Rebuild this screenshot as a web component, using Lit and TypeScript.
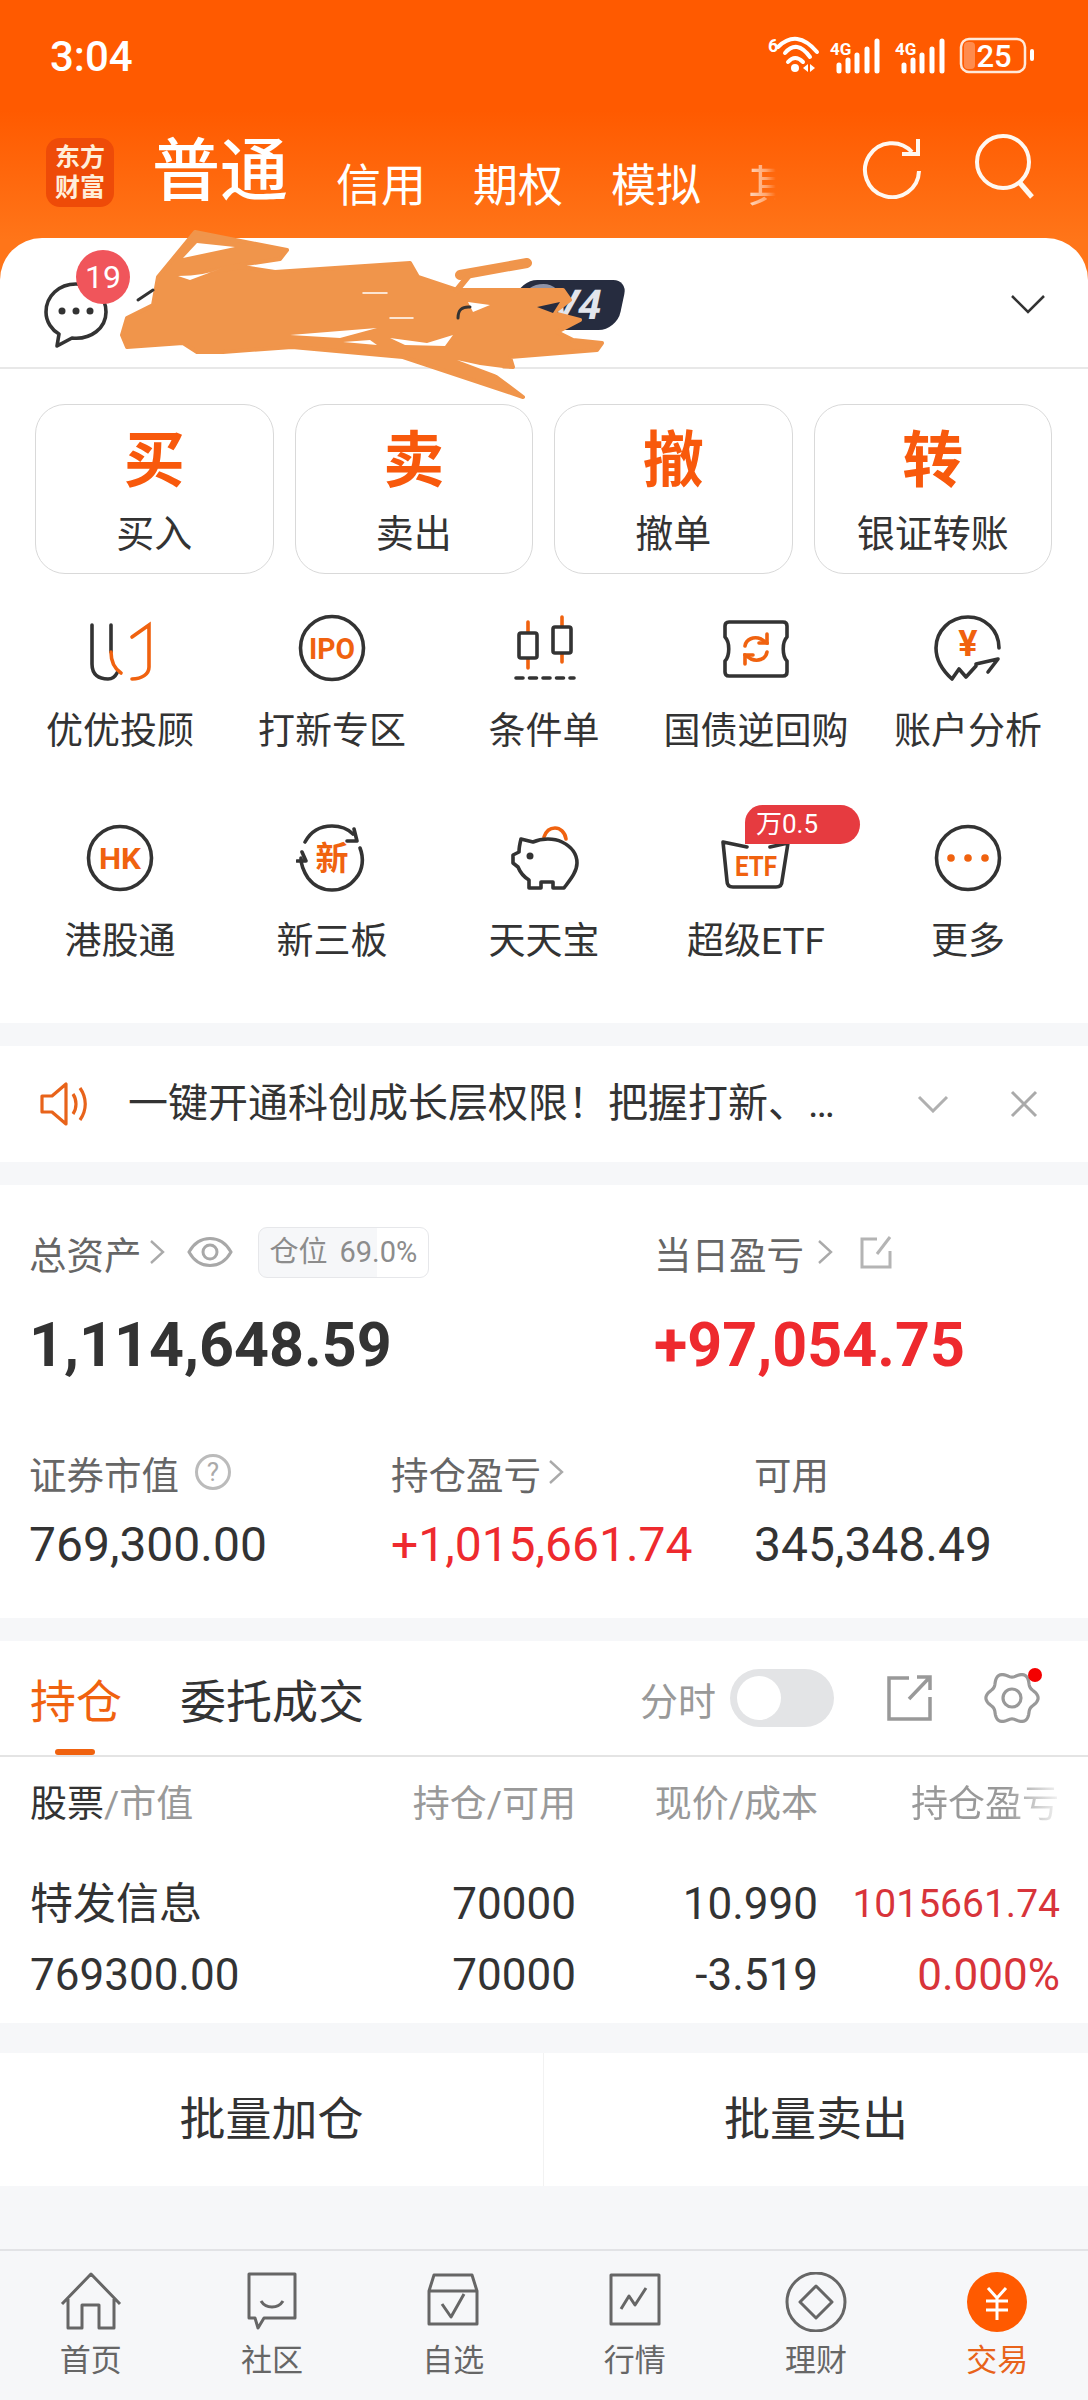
import { LitElement, html, svg, css } from "lit";
import { customElement } from "lit/decorators.js";

const circle = svg`<circle class="d" cx="36" cy="36" r="31.5"></circle>`;

const gearPath = (() => {
  const pts: string[] = [];
  for (let i = 0; i < 120; i++) {
    const a = (i / 120) * Math.PI * 2;
    const r = 23.5 + 2.6 * Math.cos(6 * a);
    pts.push(`${(30 + r * Math.cos(a)).toFixed(2)} ${(30 + r * Math.sin(a)).toFixed(2)}`);
  }
  return "M" + pts.join("L") + "Z";
})();

const icons: Record<string, unknown> = {
  uu: html`<svg viewBox="0 0 72 72" class="ic">
    <path class="d" d="M8 13V52C8 63 15 67 24 67C28 67 31 65 33 61"></path>
    <path class="d" d="M27 13V40"></path>
    <path class="o" d="M27 40C27 50 31 57 37 61"></path>
    <path class="o" d="M48 25L65 13V55C65 62 58 67 48 67"></path></svg>`,
  ipo: html`<svg viewBox="0 0 72 72" class="ic">${circle}<text class="it" x="36" y="47" font-size="30" textLength="46" lengthAdjust="spacingAndGlyphs">IPO</text></svg>`,
  cond: html`<svg viewBox="0 0 72 72" class="ic">
    <path class="o" d="M20 10V56M54 5V50"></path>
    <rect class="d wf" x="11" y="21" width="18" height="25" rx="2"></rect>
    <rect class="d wf" x="45" y="15" width="18" height="26" rx="2"></rect>
    <path class="d" d="M8 66H66" stroke-dasharray="7 6.5"></path></svg>`,
  repo: html`<svg viewBox="0 0 72 72" class="ic">
    <path class="d" d="M9 10H63C66 10 67 12 67 14V25C62 30 62 44 67 49V60C67 63 65 64 63 64H9C6 64 5 62 5 60V49C10 44 10 30 5 25V14C5 12 6 10 9 10Z"></path>
    <path class="o" d="M25 34C26 27 34 24 41 27L47 31M47 40C46 47 38 50 31 47L25 43"></path>
    <path class="o" d="M47 22V31H39M25 52V43H33"></path></svg>`,
  acct: html`<svg viewBox="0 0 72 72" class="ic">
    <path class="d" d="M67 36C67 18 53 5 36 5C18 5 4 19 4 36C4 48 10 58 20 67L27 57L34 65L44 54"></path>
    <path class="d" d="M44 52L66 47L56 60"></path>
    <text class="it" x="36" y="44" font-size="36">¥</text></svg>`,
  hk: html`<svg viewBox="0 0 72 72" class="ic">${circle}<text class="it" x="36" y="47" font-size="30" textLength="42" lengthAdjust="spacingAndGlyphs">HK</text></svg>`,
  xsb: html`<svg viewBox="0 0 72 72" class="ic">
    <path class="d" d="M9 20C15 9 25 4 36 4C44 4 52 7 57 12M64 26C68 36 67 48 60 56C54 64 45 68 36 68C27 68 18 64 12 56C8 50 5 44 5 36"></path>
    <path class="d" d="M58 7L61 19L51 19"></path>
    <path class="d" d="M1 39H10L6 30"></path>
    <text class="it" x="36" y="48" font-size="33">新</text></svg>`,
  pig: html`<svg viewBox="0 0 72 72" class="ic">
    <path class="o" d="M36 15C38 9 42 6 47 6C52 6 57 10 58 17"></path>
    <path class="d" d="M13 17L25 20C34 16 46 16 54 20C64 25 69 32 69 41C69 50 62 58 56 66H45V60H33V66H21V58C16 55 12 50 10 45L5 41V33L11 30C11 26 12 21 13 17Z"></path>
    <circle cx="22" cy="34" r="3.5" fill="#333"></circle></svg>`,
  etf: html`<svg viewBox="0 0 72 72" class="ic">
    <path class="d" d="M27 25L3 20L7 59C7 63 9 65 13 65H56C60 65 62 63 62 59L68 21L50 25"></path>
    <text class="it" x="36" y="54" font-size="28" textLength="42" lengthAdjust="spacingAndGlyphs">ETF</text></svg>`,
  more: html`<svg viewBox="0 0 72 72" class="ic">${circle}
    <circle cx="19" cy="36" r="3.8" fill="#f0620f"></circle><circle cx="36" cy="36" r="3.8" fill="#f0620f"></circle><circle cx="53" cy="36" r="3.8" fill="#f0620f"></circle></svg>`,
};

const tabIcons: Record<string, unknown> = {
  home: html`<svg viewBox="0 0 64 60" class="tic"><path class="t" d="M3 32L32 2L61 32M9 27V56H23V33H40V56H55V27"></path></svg>`,
  comm: html`<svg viewBox="0 0 64 60" class="tic"><path class="t" d="M9 2H55V46H24L18 56L15 46H9Z"></path><path class="t" d="M21 29C26 37 38 37 43 29"></path></svg>`,
  opt: html`<svg viewBox="0 0 64 60" class="tic"><path class="t" d="M8 19L13 3H51L56 19V52H8ZM8 19H56"></path><path class="t" d="M21 32L30 45L43 22"></path></svg>`,
  mkt: html`<svg viewBox="0 0 64 60" class="tic"><path class="t" d="M8 3H56V52H8Z"></path><path class="t" d="M18 37L26 24L32 33L43 16"></path></svg>`,
  fin: html`<svg viewBox="0 0 64 60" class="tic"><circle class="t" cx="32" cy="30" r="29"></circle><path class="t" d="M32 14L48 30L32 46L16 30Z"></path></svg>`,
  trade: html`<svg viewBox="0 0 64 60" class="tic"><circle cx="32" cy="30" r="30" fill="#ff5a00"></circle><path class="tw" d="M23 16L32 26L41 16M32 26V48M21 29H43M21 38H43"></path></svg>`,
};

const chevR = html`<svg class="chev" viewBox="0 0 16 26"><path d="M2 2L14 13L2 24"></path></svg>`;

const actions = [
  ["买", "买入"], ["卖", "卖出"], ["撤", "撤单"], ["转", "银证转账"],
];
const grid = [
  ["uu", "优优投顾"], ["ipo", "打新专区"], ["cond", "条件单"], ["repo", "国债逆回购"], ["acct", "账户分析"],
  ["hk", "港股通"], ["xsb", "新三板"], ["pig", "天天宝"], ["etf", "超级ETF"], ["more", "更多"],
];
const tabs = [
  ["home", "首页"], ["comm", "社区"], ["opt", "自选"], ["mkt", "行情"], ["fin", "理财"], ["trade", "交易"],
];

@customElement("app-root")
export class AppRoot extends LitElement {
  static styles = css`
    :host { display: block; width: 1088px; height: 2400px; overflow: hidden; position: relative; background: #f6f7f9;
      font-family: Roboto, "Noto Sans CJK SC", sans-serif; color: #333; }
    * { box-sizing: border-box; }
    .hero { background: linear-gradient(180deg, #ff5a00 0, #ff5a00 110px, #ff7519 240px, #ff7519 100%); }
    .status { height: 113px; padding: 34px 50px 0 50px; display: flex; justify-content: space-between; align-items: flex-start; color: #fff; }
    .time { font-size: 42px; line-height: 46px; font-weight: 500; }
    .sicons { display: block; flex: none; overflow: visible; }
    .nav { height: 125px; padding: 25px 0 0 46px; display: flex; align-items: flex-start; color: #fff; }
    .logo { width: 68px; height: 69px; border-radius: 14px; background: #ee4b08; color: #ffeeda; font-size: 25px; font-weight: 700; line-height: 30px; text-align: center; padding-top: 5px; flex: none; }
    .nav-main { font-size: 68px; line-height: 68px; margin-left: 38px; font-weight: 500; width: 136px; flex: none; }
    .nav-tab { font-size: 45px; line-height: 44px; margin-top: 27px; flex: none; }
    .t1, .t3 { margin-left: 48px; }
    .t2, .t4 { margin-left: 47px; }
    .t4 { -webkit-mask-image: linear-gradient(90deg, rgba(0,0,0,.75) 0, rgba(0,0,0,.4) 40%, transparent 62%); mask-image: linear-gradient(90deg, rgba(0,0,0,.75) 0, rgba(0,0,0,.4) 40%, transparent 62%); }
    .nav-ic { stroke: #fff8f0; fill: none; stroke-width: 4; flex: none; }
    .refresh { width: 64px; height: 64px; margin: -3px 0 0 67px; }
    .search { width: 68px; height: 66px; margin: -5px 0 0 46px; }
    .acct { height: 131px; background: #fff; border-radius: 42px 42px 0 0; border-bottom: 2px solid #e8e8e8; display: flex; align-items: center; justify-content: space-between; padding: 0 42px 0 44px; position: relative; }
    .chat { width: 64px; height: 66px; margin-top: 24px; }
    .badge { position: absolute; left: 76px; top: 12px; width: 54px; height: 54px; border-radius: 50%; background: #f0555b; color: #fff; font-size: 32px; line-height: 54px; text-align: center; }
    .level { position: absolute; left: 514px; top: 42px; width: 108px; height: 50px; background: #262c3f; border-radius: 18px 14px 18px 14px; transform: skewX(-12deg); color: #e2e5ec; font-weight: 700; font-size: 41px; line-height: 50px; text-align: right; padding-right: 20px; overflow: hidden; }
    .avatar { position: absolute; left: 6px; top: 4px; width: 38px; height: 30px; border-radius: 50%; background: #8f93a6; }
    .down { width: 36px; height: 20px; fill: none; stroke: #333; stroke-width: 2.5; margin-top: 2px; }
    .scribble { position: absolute; left: 0; top: 220px; width: 640px; height: 190px; z-index: 2; }
    .main { background: #fff; height: 654px; }
    .actions { display: grid; grid-template-columns: repeat(4, 238.5px); column-gap: 21px; padding: 35px 0 0 35px; }
    .act { height: 170px; border: 1.5px solid #d9d9d9; border-radius: 30px; text-align: center; }
    .act b { display: block; color: #f8590c; font-size: 61px; line-height: 60px; font-weight: 700; margin-top: 26px; }
    .act span { display: block; font-size: 38px; line-height: 40px; margin-top: 23px; color: #333; }
    .grid { display: grid; grid-template-columns: repeat(5, 212px); padding: 38px 0 0 14px; row-gap: 0; }
    .cell { height: 210px; display: flex; flex-direction: column; align-items: center; position: relative; font-size: 37px; line-height: 42px; white-space: nowrap; }
    .ic { width: 72px; height: 72px; display: block; margin-bottom: 27px; }
    .d { fill: none; stroke: #333; stroke-width: 3.6; stroke-linejoin: round; stroke-linecap: round; }
    .wf { fill: #fff; }
    .o { fill: none; stroke: #f0620f; stroke-width: 3.6; stroke-linecap: round; }
    .it { fill: #f0620f; font-weight: 700; text-anchor: middle; font-family: Roboto, "Noto Sans CJK SC", sans-serif; }
    .tag { position: absolute; left: 95px; top: -17px; width: 115px; height: 39px; background: #e63b40; color: #fff; font-size: 26px; line-height: 39px; padding-left: 11px; border-radius: 18px 20px 20px 0; z-index: 1; }
    .gap { height: 23px; }
    .notice { height: 116px; background: #fff; display: flex; align-items: center; padding: 0 0 0 40px; position: relative; }
    .notice .spk { width: 48px; height: 44px; fill: none; stroke: #e8631a; stroke-width: 3.2; flex: none; }
    .notice p { margin: 0 0 0 40px; font-size: 40px; line-height: 50px; white-space: nowrap; flex: none; width: 725px; }
    .notice .nd { width: 32px; height: 18px; fill: none; stroke: #b0b0b0; stroke-width: 3; margin-left: 64px; flex: none; }
    .notice .nx { width: 28px; height: 28px; fill: none; stroke: #aaa; stroke-width: 3; margin-left: 61px; flex: none; }
    .assets { height: 433px; background: #fff; padding: 42px 0 0 29px; position: relative; }
    .top, .bot { display: grid; }
    .top { grid-template-columns: 625px 1fr; }
    .bot { grid-template-columns: 362px 363px 1fr; margin-top: 67px; }
    .lab { display: flex; align-items: center; height: 50px; font-size: 37.5px; color: #666; white-space: nowrap; }
    .chev { width: 16px; height: 26px; fill: none; stroke: #aaa; stroke-width: 2.4; margin-left: 7px; flex: none; }
    .wide .chev { margin-left: 13px; }
    .eye { width: 46px; height: 34px; fill: none; stroke: #a8a8a8; stroke-width: 3; margin-left: 22px; flex: none; }
    .chip { width: 171px; height: 51px; margin-left: 25px; border: 1.5px solid #e6e7ea; border-radius: 9px; background: linear-gradient(90deg, #f6f7f9 0, #f6f7f9 70%, #fff 70%); color: #8c8c8c; font-size: 29px; line-height: 48px; padding-left: 11px; white-space: nowrap; }
    .chip i { font-style: normal; margin-left: 12px; }
    .share { width: 34px; height: 36px; fill: none; stroke: #b4b4b4; stroke-width: 3; margin-left: 26px; flex: none; }
    .big { font-size: 61px; line-height: 70px; font-weight: 700; margin-top: 33px; white-space: nowrap; }
    .mid { font-size: 48px; line-height: 56px; margin-top: 20px; white-space: nowrap; }
    .red { color: #ee2a2e; }
    .q { width: 36px; height: 36px; border: 3px solid #bbb; border-radius: 50%; margin-left: 16px; color: #aaa; font-size: 26px; line-height: 30px; text-align: center; flex: none; }
    .hold { background: #fff; height: 382px; }
    .htabs { height: 116px; border-bottom: 2px solid #e4e4e4; display: flex; align-items: center; padding: 0 0 0 30px; position: relative; font-size: 46px; white-space: nowrap; }
    .htabs .on { color: #f0620f; width: 92px; flex: none; }
    .htabs .off { margin-left: 58px; width: 460px; flex: none; }
    .ul { position: absolute; left: 55px; bottom: 0; width: 40px; height: 6px; border-radius: 3px; background: #f0620f; }
    .fs { width: 90px; color: #999; font-size: 38px; flex: none; }
    .tog { width: 104px; height: 58px; border-radius: 29px; background: #e3e4e6; position: relative; flex: none; }
    .tog::after { content: ""; position: absolute; left: 7px; top: 7px; width: 44px; height: 44px; border-radius: 50%; background: #fff; }
    .hshare { width: 46px; height: 46px; fill: none; stroke: #999; stroke-width: 3.5; margin-left: 53px; flex: none; }
    .gear { width: 60px; height: 60px; fill: none; stroke: #999; stroke-width: 3.2; margin-left: 49px; flex: none; }
    .row { display: grid; grid-template-columns: 414px 132px 242px 242px; padding-left: 30px; white-space: nowrap; }
    .row > * { text-align: right; }
    .row > :first-child { text-align: left; }
    .thead { font-size: 37px; color: #999; line-height: 42px; padding-top: 27px; grid-template-columns: 300px 246px 242px 242px; }
    .thead b { color: #333; font-weight: 400; }
    .thead .cut { text-align: left; padding-left: 93px; background: linear-gradient(90deg, #999 0, #999 78%, rgba(153,153,153,.1) 100%); -webkit-background-clip: text; background-clip: text; color: transparent; }
    .r1 { font-size: 44px; line-height: 50px; margin-top: 53px; }
    .r1 > :first-child { font-size: 43px; }
    .r2 { font-size: 44px; line-height: 50px; margin-top: 21px; }
    .pnl { color: #d8343a; font-size: 39px; }
    .pct { color: #d8343a; }
    .gap2 { height: 30px; }
    .bulk { height: 133px; background: #fff; display: grid; grid-template-columns: 543px 1fr; text-align: center; font-size: 46px; line-height: 133px; }
    .bulk div + div { border-left: 1px solid #f2f2f2; }
    .tabbar { position: absolute; left: 0; right: 0; top: 2249px; height: 151px; border-top: 2px solid #e2e3e6; display: grid; grid-template-columns: repeat(6, 1fr); padding-top: 21px; background: #f6f7f9; }
    .tb { display: flex; flex-direction: column; align-items: center; font-size: 31px; line-height: 36px; color: #666; }
    .tb.on { color: #e8631a; }
    .tic { width: 64px; height: 60px; margin-bottom: 11px; }
    .t { fill: none; stroke: #666; stroke-width: 3; stroke-linejoin: round; }
    .tw { fill: none; stroke: #fff; stroke-width: 3; }
  `;

  render() {
    return html`
      <div class="hero">
        <div class="status">
          <div class="time">3:04</div>
          <svg width="270" height="44" viewBox="0 -4 270 44" class="sicons" fill="none" stroke="#fff">
            <text x="0" y="14" font-size="18" font-weight="700" fill="#fff" stroke="none">6</text>
            <path d="M10 9Q29 -9.5 49 14" stroke-width="4" stroke-linecap="round"></path>
            <path d="M17 15Q29 1 42 19" stroke-width="4" stroke-linecap="round"></path>
            <path d="M20 24Q27 16 35 24" stroke-width="4" stroke-linecap="round"></path>
            <circle cx="27" cy="30" r="4" fill="#fff" stroke="none"></circle>
            <path d="M40 26V34L35 30ZM42 26V34L47 30Z" fill="#fff" stroke="none"></path>
            <text x="62" y="17" font-size="17" font-weight="700" fill="#fff" stroke="none">4G</text>
            <path d="M71 27V33M80 22V33M89 17V33M99 11V33M109 3V33" stroke-width="5" stroke-linecap="round"></path>
            <text x="127" y="17" font-size="17" font-weight="700" fill="#fff" stroke="none">4G</text>
            <path d="M136 27V33M145 22V33M154 17V33M164 11V33M174 3V33" stroke-width="5" stroke-linecap="round"></path>
            <rect x="193" y="1" width="64" height="33" rx="8" stroke-width="2.5" stroke="#ffe9da"></rect>
            <rect x="196" y="4" width="11" height="27" rx="4" fill="#ff8b4d" stroke="none"></rect>
            <text x="226" y="29" font-size="31" font-weight="500" fill="#fff" stroke="none" text-anchor="middle">25</text>
            <path d="M264 13V21" stroke-width="4" stroke-linecap="round"></path>
          </svg>
        </div>
        <div class="nav">
          <div class="logo">东方<br />财富</div>
          <div class="nav-main">普通</div>
          <div class="nav-tab t1">信用</div>
          <div class="nav-tab t2">期权</div>
          <div class="nav-tab t3">模拟</div>
          <div class="nav-tab t4">其</div>
          <svg class="nav-ic refresh" viewBox="0 0 64 64"><path d="M52 17A27 27 0 1 0 59 36"></path><path d="M58 4V19H42"></path></svg>
          <svg class="nav-ic search" viewBox="0 0 68 66"><circle cx="33" cy="29" r="26"></circle><path d="M50 50L62 64" stroke-width="5"></path></svg>
        </div>
        <div class="acct">
          <svg class="chat" viewBox="0 0 64 66" fill="none" stroke="#333" stroke-width="3.6">
            <path d="M32 2C15 2 2 14 2 30C2 40 8 48 15 52L13 64L28 56C47 58 62 46 62 30C62 14 49 2 32 2Z" stroke-linejoin="round"></path>
            <circle cx="18" cy="29" r="3.5" fill="#333" stroke="none"></circle><circle cx="32" cy="29" r="3.5" fill="#333" stroke="none"></circle><circle cx="46" cy="29" r="3.5" fill="#333" stroke="none"></circle>
          </svg>
          <div class="badge">19</div>
          <div class="level"><div class="avatar"></div>V4</div>
          <svg class="down" viewBox="0 0 36 20"><path d="M2 2L18 18L34 2"></path></svg>
        </div>
      </div>
      <svg class="scribble" viewBox="0 220 640 190" fill="#f0954b" stroke="#f0954b" stroke-linejoin="round" stroke-linecap="round">
        <path d="M158 277L195 232L287 250L280 259L240 265L205 272L243 267L275 272L410 263L418 277L457 290L563 290L570 300L553 313L580 320L557 332L573 340L602 343L597 350L510 357L513 367L480 365L523 397L403 357L292 347L223 352L197 352L183 343L127 347L122 335L127 318L153 305Z" stroke-width="4"></path>
        <path d="M460 275L527 263" fill="none" stroke-width="10"></path>
        <path d="M457 290L470 274" fill="none" stroke-width="6"></path>
        <path d="M197 243L235 247L183 258Z" fill="#fff" stroke="none"></path>
        <path d="M178 276Q205 276 222 268L190 280Z" fill="#fff" stroke="none"></path>
        <path d="M290 335L377 328L340 338Z" fill="#fff" stroke="none"></path>
        <path d="M343 342L370 340L377 345Z" fill="#fff" stroke="none"></path>
        <path d="M390 338L427 343L453 335L445 346L405 345Z" fill="#fff" stroke="none"></path>
        <path d="M457 360L497 375L503 368L480 365Z" fill="#fff" stroke="none"></path>
        <path d="M468 302L490 305L473 312Z" fill="#fff" stroke="none"></path>
        <path d="M537 307L560 302L553 313Z" fill="#262c3f" stroke="none"></path>
        <path d="M458 318Q458 306 470 307" fill="none" stroke="#333" stroke-width="3"></path>
        <path d="M363 293H387M390 318H413" fill="none" stroke="#fff" stroke-width="1.5"></path>
        <path d="M138 300L153 290" fill="none" stroke="#333" stroke-width="3"></path>
      </svg>
      <div class="main">
        <div class="actions">
          ${actions.map(([a, b]) => html`<div class="act"><b>${a}</b><span>${b}</span></div>`)}
        </div>
        <div class="grid">
          ${grid.map(([k, l]) => html`<div class="cell">${icons[k]}<span>${l}</span>${k === "etf" ? html`<div class="tag">万0.5</div>` : ""}</div>`)}
        </div>
      </div>
      <div class="gap"></div>
      <div class="notice">
        <svg class="spk" viewBox="0 0 48 44"><path d="M2 14H12L26 2V42L12 30H2Z" stroke-linejoin="round"></path><path d="M33 12C37 18 37 26 33 32M40 6C47 16 47 28 40 38"></path></svg>
        <p>一键开通科创成长层权限！把握打新、…</p>
        <svg class="nd" viewBox="0 0 32 18"><path d="M2 2L16 16L30 2"></path></svg>
        <svg class="nx" viewBox="0 0 28 28"><path d="M2 2L26 26M26 2L2 26"></path></svg>
      </div>
      <div class="gap"></div>
      <div class="assets">
        <div class="top">
          <div>
            <div class="lab">总资产${chevR}
              <svg class="eye" viewBox="0 0 46 34"><path d="M2 17C12 -1 34 -1 44 17C34 35 12 35 2 17Z"></path><circle cx="23" cy="17" r="7"></circle></svg>
              <div class="chip">仓位<i>69.0%</i></div>
            </div>
            <div class="big">1,114,648.59</div>
          </div>
          <div>
            <div class="lab wide">当日盈亏${chevR}
              <svg class="share" viewBox="0 0 34 36"><path d="M18 5H3V33H31V17"></path><path d="M18 20L31 3"></path></svg>
            </div>
            <div class="big red">+97,054.75</div>
          </div>
        </div>
        <div class="bot">
          <div><div class="lab">证券市值<div class="q">?</div></div><div class="mid">769,300.00</div></div>
          <div><div class="lab">持仓盈亏${chevR}</div><div class="mid red">+1,015,661.74</div></div>
          <div><div class="lab">可用</div><div class="mid">345,348.49</div></div>
        </div>
      </div>
      <div class="gap"></div>
      <div class="hold">
        <div class="htabs">
          <div class="on">持仓</div>
          <div class="off">委托成交</div>
          <div class="fs">分时</div>
          <div class="tog"></div>
          <svg class="hshare" viewBox="0 0 46 46"><path d="M22 3H2V44H43V22"></path><path d="M22 24L43 2M30 2H43V15"></path></svg>
          <svg class="gear" viewBox="0 0 60 60"><path d=${gearPath}></path><circle cx="30" cy="30" r="9"></circle><circle cx="53" cy="7" r="7" fill="#f40000" stroke="none"></circle></svg>
          <div class="ul"></div>
        </div>
        <div class="row thead"><div><b>股票</b>/市值</div><div>持仓/可用</div><div>现价/成本</div><div class="cut">持仓盈亏</div></div>
        <div class="row r1"><div>特发信息</div><div>70000</div><div>10.990</div><div class="pnl">1015661.74</div></div>
        <div class="row r2"><div>769300.00</div><div>70000</div><div>-3.519</div><div class="pct">0.000%</div></div>
      </div>
      <div class="gap2"></div>
      <div class="bulk"><div>批量加仓</div><div>批量卖出</div></div>
      <div class="tabbar">
        ${tabs.map(([k, l]) => html`<div class="tb ${k === "trade" ? "on" : ""}">${tabIcons[k]}<span>${l}</span></div>`)}
      </div>
    `;
  }
}
